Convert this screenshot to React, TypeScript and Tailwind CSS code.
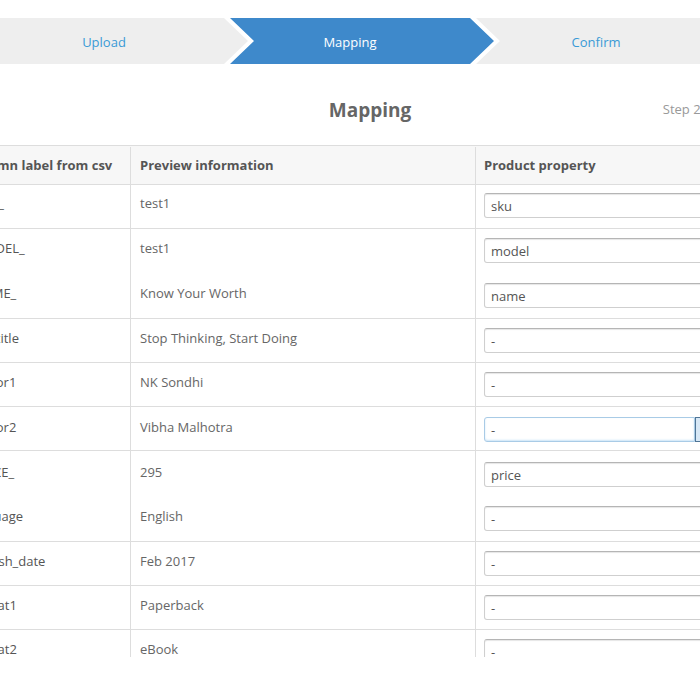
import React from "react";

type Row = {
  label: string;
  preview: string;
  value: string;
  h: string;
  pt: string;
  joined?: boolean;
  focused?: boolean;
};

const rows: Row[] = [
  { label: "_SKU_", preview: "test1", value: "sku", h: "h-[44px]", pt: "pt-[8px]" },
  { label: "_MODEL_", preview: "test1", value: "model", h: "h-[45px]", pt: "pt-[9px]", joined: true },
  { label: "_NAME_", preview: "Know Your Worth", value: "name", h: "h-[45px]", pt: "pt-[9px]" },
  { label: "sub_title", preview: "Stop Thinking, Start Doing", value: "-", h: "h-[44px]", pt: "pt-[9px]" },
  { label: "author1", preview: "NK Sondhi", value: "-", h: "h-[44px]", pt: "pt-[9px]" },
  { label: "author2", preview: "Vibha Malhotra", value: "-", h: "h-[44px]", pt: "pt-[10px]", focused: true },
  { label: "_PRICE_", preview: "295", value: "price", h: "h-[45px]", pt: "pt-[11px]", joined: true },
  { label: "language", preview: "English", value: "-", h: "h-[46px]", pt: "pt-[10px]" },
  { label: "publish_date", preview: "Feb 2017", value: "-", h: "h-[44px]", pt: "pt-[9px]" },
  { label: "format1", preview: "Paperback", value: "-", h: "h-[44px]", pt: "pt-[9px]" },
  { label: "format2", preview: "eBook", value: "-", h: "h-[44px]", pt: "pt-[9px]" },
];

const notched =
  "[clip-path:polygon(0_0,calc(100%_-_24px)_0,100%_50%,calc(100%_-_24px)_100%,0_100%,24px_50%)]";
const flat = "[clip-path:polygon(0_0,calc(100%_-_24px)_0,100%_50%,calc(100%_-_24px)_100%,0_100%)]";

function Step({ label, active, first }: { label: string; active?: boolean; first?: boolean }) {
  return (
    <div
      className={`${first ? flat : `${notched} -ml-[18px]`} flex h-[46px] w-[264px] shrink-0 items-center justify-center pt-[3px] pr-[24px] text-[13px] ${
        active ? "bg-[#3e89cb] text-white" : "bg-[#eeeeee] text-[#3a9ad6]"
      }`}
    >
      {label}
    </div>
  );
}

function PropertyField({ value, focused }: { value: string; focused?: boolean }) {
  if (focused) {
    return (
      <div className="flex h-[25px]">
        <div className="flex h-[25px] w-[211px] items-center rounded-l-[3px] border border-[#a9cbe6] bg-white px-[6px] text-[13px] text-[#555] shadow-[inset_0_-1px_2px_rgba(102,175,233,0.35)]">
          {value}
        </div>
        <div className="h-[25px] w-[30px] border border-[#4f7596] bg-[#d7e8f6]" />
      </div>
    );
  }
  return (
    <div className="flex h-[25px] items-center rounded-[3px] border border-[#cfcfcf] border-t-[#b5b5b5] bg-white px-[6px] text-[13px] text-[#555] shadow-[inset_0_1px_1px_rgba(0,0,0,0.1)]">
      {value}
    </div>
  );
}

export default function App() {
  return (
    <div className="h-[700px] w-[700px] overflow-hidden bg-white font-['Open_Sans',sans-serif]">
      <div className="-ml-[36px] w-[812px]">
        <div className="ml-[20px] flex pt-[18px]">
          <Step label="Upload" first />
          <Step label="Mapping" active />
          <Step label="Confirm" />
        </div>

        <div className="mt-[32px] grid grid-cols-[1fr_auto_1fr] items-center">
          <div />
          <h1 className="text-[19px] font-bold leading-[28px] text-[#666]">Mapping</h1>
          <div className="flex justify-end pr-[49px] text-[13px] text-[#999]">Step 2 of 3</div>
        </div>

        <div className="mt-[21px] h-[512px] overflow-hidden">
          <div className="grid h-[40px] grid-cols-[167px_345px_300px] border-y border-[#dddddd] bg-[#f7f7f7] pt-px text-[13px] font-bold text-[#555]">
            <div className="flex items-center border-r border-[#dddddd] pl-[4px] whitespace-nowrap">
              Column label from csv
            </div>
            <div className="flex items-center border-r border-[#dddddd] pl-[9px]">Preview information</div>
            <div className="flex items-center pl-[8px]">Product property</div>
          </div>

          {rows.map((r) => (
            <div
              key={r.label}
              className={`grid ${r.h} grid-cols-[167px_345px_300px] text-[13px] leading-[20px] text-[#666] ${
                r.joined ? "" : "border-b border-[#dddddd]"
              }`}
            >
              <div className={`border-r border-[#dddddd] ${r.pt} pl-[4px] whitespace-nowrap text-[#555]`}>
                {r.label}
              </div>
              <div className={`border-r border-[#dddddd] ${r.pt} pl-[9px]`}>{r.preview}</div>
              <div className={`${r.pt} pl-[8px]`}>
                <PropertyField value={r.value} focused={r.focused} />
              </div>
            </div>
          ))}
        </div>
      </div>
    </div>
  );
}
